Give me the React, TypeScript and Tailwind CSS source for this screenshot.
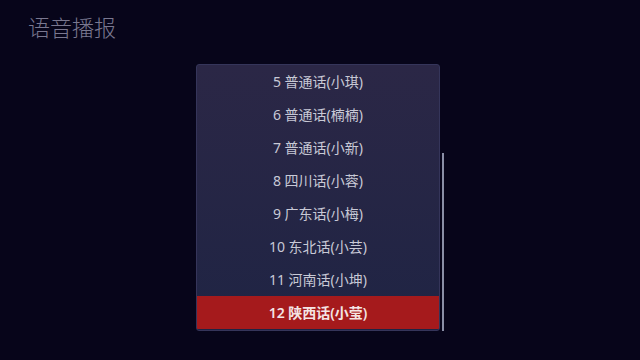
const items = [
  '5 普通话(小琪)',
  '6 普通话(楠楠)',
  '7 普通话(小新)',
  '8 四川话(小蓉)',
  '9 广东话(小梅)',
  '10 东北话(小芸)',
  '11 河南话(小坤)',
  '12 陕西话(小莹)',
];

export default function App() {
  const selected = 7;
  return (
    <div
      className="relative h-[360px] w-[640px] overflow-hidden bg-[#07051a]"
      style={{ fontFamily: '"Noto Sans", "Noto Sans CJK SC", sans-serif' }}
    >
      <div className="pl-[28px] pt-[11px] text-[22px] font-light leading-[32px] text-[#7a7890]">语音播报</div>

      <div className="flex pl-[196px] pt-[21px]">
        <div className="w-[244px] overflow-hidden rounded-[3px] border border-[#35355a] bg-gradient-to-b from-[#2b2746] to-[#1f2444]">
          {items.map((label, i) => (
            <div
              key={label}
              className={
                i === selected
                  ? 'flex h-[33px] items-center justify-center bg-[#a51a1c] text-[14px] font-semibold text-[#f4e4e4]'
                  : 'flex h-[33px] items-center justify-center text-[14px] text-[#c8c9d6]'
              }
            >
              {label}
            </div>
          ))}
        </div>
        <div className="ml-[2px] mt-[89px] h-[178px] w-[2px] bg-[#8a8fa6]" />
      </div>
    </div>
  );
}
